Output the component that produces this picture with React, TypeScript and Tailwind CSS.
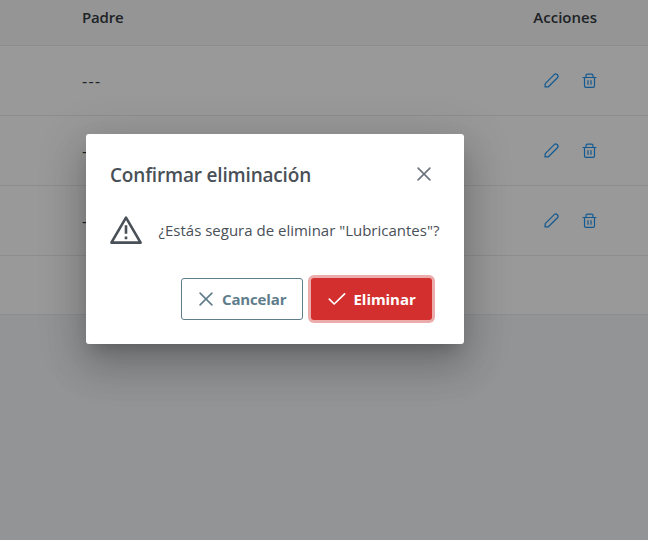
import React from 'react';

type IconProps = { className?: string };

function Pencil({ className = '' }: IconProps) {
  return (
    <svg viewBox="0 0 16 16" fill="none" stroke="currentColor" strokeWidth="1.35" strokeLinejoin="round" className={className}>
      <path d="M1.1 14.9 1.3 11.3 10.9 1.7Q12.4.3 13.9 1.6L14.4 2.1Q15.7 3.6 14.3 5.1L4.7 14.7Z" />
    </svg>
  );
}

function Trash({ className = '' }: IconProps) {
  return (
    <svg viewBox="0 0 15 15" fill="none" stroke="currentColor" strokeWidth="1.2" strokeLinecap="round" className={className}>
      <path d="M1 4.5H14M2.5 4.5V13Q2.5 14.4 4 14.4H11Q12.5 14.4 12.5 13V4.5M4 4.5V2.5Q4 1.2 5.4 1.2H9.6Q11 1.2 11 2.5V4.5M6 7.5V11.3M9 7.5V11.3" />
    </svg>
  );
}

function Times({ className = '' }: IconProps) {
  return (
    <svg viewBox="0 0 14 14" fill="none" stroke="currentColor" strokeWidth="1.6" strokeLinecap="round" className={className}>
      <path d="M1.1 1.1 12.9 12.9M12.9 1.1 1.1 12.9" />
    </svg>
  );
}

function Check({ className = '' }: IconProps) {
  return (
    <svg viewBox="0 0 18 14" fill="none" stroke="currentColor" strokeWidth="1.7" strokeLinecap="round" strokeLinejoin="round" className={className}>
      <path d="M1.3 7.2 6.2 12 16.6 1.8" />
    </svg>
  );
}

function Warning({ className = '' }: IconProps) {
  return (
    <svg viewBox="0 0 32 28" fill="none" stroke="currentColor" strokeWidth="2.6" strokeLinejoin="round" className={className}>
      <path d="M16 1.6 30.6 26.6H1.4Z" />
      <path d="M16 9.3V17.8M16 20.4V23.2" />
    </svg>
  );
}

function Row() {
  return (
    <div className="flex h-[70px] items-center border-b border-[#e9ecef] bg-white pl-[82px] pr-[51px]">
      <span className="text-[16px] leading-6 tracking-[1.3px] text-[#343a40]">---</span>
      <div className="ml-auto flex gap-[23px] pb-px text-[#2196f3]">
        <Pencil className="size-[15px]" />
        <Trash className="size-[15px]" />
      </div>
    </div>
  );
}

export default function App() {
  return (
    <div className="relative h-[540px] w-[648px] overflow-hidden bg-[#f5f7fa] font-['Open_Sans','Noto_Sans',sans-serif]">
      <div className="flex h-[46px] items-center justify-between border-b border-[#e9ecef] bg-[#f8f9fa] pb-[11px] pl-[82px] pr-[51px] text-[15px] font-semibold text-[#343a40]">
        <span className="tracking-[-0.2px]">Padre</span>
        <span>Acciones</span>
      </div>
      <Row />
      <Row />
      <Row />
      <div className="h-[59px] border-b border-[#e9ecef] bg-white" />

      <div className="absolute inset-0 bg-black/40">
        <div
          role="dialog"
          className="ml-[86px] mt-[134px] flex h-[210px] w-[378px] flex-col rounded-[3px] bg-white text-[#495057] shadow-[0_11px_15px_-7px_rgba(0,0,0,0.2),0_24px_38px_3px_rgba(0,0,0,0.14),0_9px_46px_8px_rgba(0,0,0,0.12)]"
        >
          <div className="flex h-[80px] items-center justify-between pl-6 pr-[33px]">
            <h2 className="whitespace-nowrap pt-[2px] text-[19px] font-semibold tracking-[-0.18px]">Confirmar eliminación</h2>
            <Times className="size-[14px] text-[#6c757d]" />
          </div>
          <div className="flex h-[32px] items-center pl-6">
            <Warning className="h-[28px] w-[32px]" />
            <span className="ml-[16.5px] whitespace-nowrap text-[15px]">¿Estás segura de eliminar "Lubricantes"?</span>
          </div>
          <div className="flex gap-2 pl-[95px] pt-[32px] text-[15px] font-bold">
            <button className="flex h-[42px] w-[122px] items-center rounded-[3px] border border-[#607d8b] pl-[17px] text-[#607d8b]">
              <Times className="size-[14px]" />
              <span className="ml-[9px] tracking-[-0.15px]">Cancelar</span>
            </button>
            <button className="flex h-[42px] w-[121px] items-center rounded-[3px] bg-[#d32f2f] pl-[17px] text-white shadow-[0_0_0_3px_#edacac]">
              <Check className="h-[14px] w-[18px]" />
              <span className="ml-[7.5px] tracking-[-0.05px]">Eliminar</span>
            </button>
          </div>
        </div>
      </div>
    </div>
  );
}
